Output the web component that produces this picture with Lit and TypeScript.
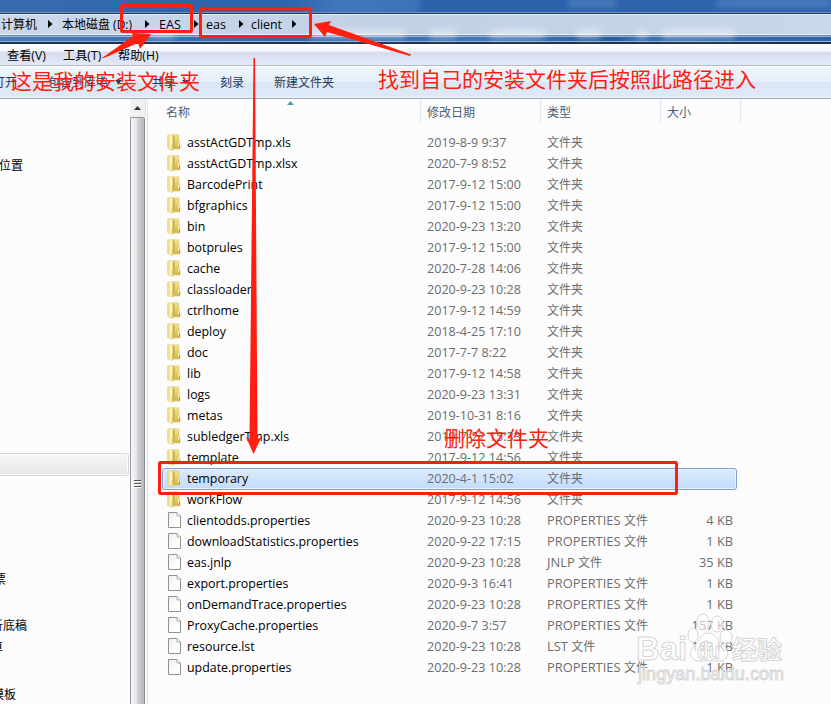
import { LitElement, html, css, svg } from "lit";
import { customElement } from "lit/decorators.js";

type Entry = { name: string; date: string; kind?: string; type: string; size?: string; file?: boolean; selected?: boolean };

const folder = (name: string, date: string, selected = false): Entry => ({ name, date, type: "文件夹", selected });
const file = (name: string, date: string, kind: string, size: string): Entry => ({ name, date, kind, type: "文件", size, file: true });

const ENTRIES: Entry[] = [
  folder("asstActGDTmp.xls", "2019-8-9 9:37"),
  folder("asstActGDTmp.xlsx", "2020-7-9 8:52"),
  folder("BarcodePrint", "2017-9-12 15:00"),
  folder("bfgraphics", "2017-9-12 15:00"),
  folder("bin", "2020-9-23 13:20"),
  folder("botprules", "2017-9-12 15:00"),
  folder("cache", "2020-7-28 14:06"),
  folder("classloader", "2020-9-23 10:28"),
  folder("ctrlhome", "2017-9-12 14:59"),
  folder("deploy", "2018-4-25 17:10"),
  folder("doc", "2017-7-7 8:22"),
  folder("lib", "2017-9-12 14:58"),
  folder("logs", "2020-9-23 13:31"),
  folder("metas", "2019-10-31 8:16"),
  folder("subledgerTmp.xls", "2019-7-22 15:33"),
  folder("template", "2017-9-12 14:56"),
  folder("temporary", "2020-4-1 15:02", true),
  folder("workFlow", "2017-9-12 14:56"),
  file("clientodds.properties", "2020-9-23 10:28", "PROPERTIES", "4 KB"),
  file("downloadStatistics.properties", "2020-9-22 17:15", "PROPERTIES", "1 KB"),
  file("eas.jnlp", "2020-9-23 10:28", "JNLP", "35 KB"),
  file("export.properties", "2020-9-3 16:41", "PROPERTIES", "1 KB"),
  file("onDemandTrace.properties", "2020-9-23 10:28", "PROPERTIES", "1 KB"),
  file("ProxyCache.properties", "2020-9-7 3:57", "PROPERTIES", "157 KB"),
  file("resource.lst", "2020-9-23 10:28", "LST", "183 KB"),
  file("update.properties", "2020-9-23 10:28", "PROPERTIES", "1 KB"),
];

const folderIcon = html`<svg class="icon" width="14" height="17" viewBox="0 0 14 17">
  <defs>
    <linearGradient id="a" x1="0" x2="1"><stop offset="0" stop-color="#e9d77f"/><stop offset=".45" stop-color="#fbf3b5"/><stop offset="1" stop-color="#d9c25c"/></linearGradient>
    <linearGradient id="b" x1="0" x2="0" y1="0" y2="1"><stop offset="0" stop-color="#f3e493"/><stop offset="1" stop-color="#d8b63f"/></linearGradient>
  </defs>
  <path d="M6 .8h5.3q.7 0 .7.7V8l1 .7V15H6z" fill="url(#b)" stroke="#d9c168" stroke-width=".5"/>
  <path d="M.6 1.5Q.6.7 1.400.7H6L7.600 2V15L5 16.400.6 14.600z" fill="url(#a)" stroke="#e0cb70" stroke-width=".5"/>
  <path d="M5.400 1.600l2 .8v11L5.400 15.500z" fill="#b99c3c" opacity=".6"/>
  <path d="M4.200 2h1v8.500l-1-1z" fill="#fff"/>
  <path d="M11.800 8.500v4" stroke="#fffbe0" stroke-width="1"/>
  <path d="M12.500 11v3" stroke="#62aec0" stroke-width="1"/>
</svg>`;

const fileIcon = html`<svg class="icon" width="14" height="17" viewBox="0 0 14 17">
  <defs><linearGradient id="c" x1="0" y1="0" x2="1" y2="1"><stop offset="0" stop-color="#ededeb"/><stop offset=".6" stop-color="#fdfdfc"/></linearGradient></defs>
  <path d="M1.500.5H10L13.500 4V15.500H1.500z" fill="url(#c)" stroke="#929292"/>
  <path d="M10 .8V4h3.300" fill="#fff" stroke="#a0a0a0" stroke-width=".9"/>
</svg>`;

const arrow = html`<svg class="arrow" width="5" height="8" viewBox="0 0 5 8"><path d="M0 0L4.500 4L0 8z" fill="#000"/></svg>`;
const down = html`<svg class="down" width="7" height="4" viewBox="0 0 7 4"><path d="M0 0H7L3.500 4z" fill="#1e395b"/></svg>`;

@customElement("app-root")
export class AppRoot extends LitElement {
  static styles = css`
    :host {
      display: flex; flex-direction: column; position: relative;
      width: 831px; height: 704px; overflow: hidden; background: #fcfcfc;
      font: 12px/21px "Open Sans", "Noto Sans CJK SC", sans-serif; color: #000;
      white-space: nowrap;
    }
    * { box-sizing: border-box; }
    svg { flex: none; display: block; }
    .title { height: 13px; flex: none; background: linear-gradient(100deg, #396cae 0, #2f65ac 22%, #2f65ad 35%, #4377bb 41%, #3e72b6 50%, #2b62ab 51%, #2d64ad 100%); position: relative; border-bottom: 1px solid #6b93c6; }
    .smudge { position: absolute; filter: blur(3px); background: #a9c6ea; opacity: .28; height: 7px; top: 0; }
    .s1 { left: 568px; width: 48px; }
    .s2 { left: 716px; width: 115px; }
    .address { height: 22px; flex: none; display: flex; align-items: center; border-top: 1px solid #26364f; border-bottom: 1px solid #e9f1fa; background: linear-gradient(90deg, #cbd8ea, #c1d1e6 50%, #c8d7ea); box-shadow: inset 0 1px #e6eef7; position: relative; }
    .glow { position: absolute; filter: blur(3px); background: #fff; opacity: .45; height: 8px; top: 16px; }
    .crumb { flex: none; position: relative; margin-left: 9px; }
    .pc { width: 47px; margin-left: 1px; }
    .disk { width: 83px; }
    .e1 { width: 35px; font-size: 12.600px; }
    .e2 { width: 33px; margin-left: 7px; font-size: 12.600px; }
    .e3 { width: 41px; margin-left: 7px; font-size: 12.300px; }
    .arrow { position: relative; }
    .band { height: 9px; flex: none; border-top: 1px solid #6d86ac; border-bottom: 2px solid #1f3350; background: linear-gradient(90deg, #4a7cbc, #2f68b0 35%, #4478bb 60%, #285c9f 74%, #3c70b5 76%, #2c64ae); box-shadow: inset 0 1px #99b3d5, inset 0 -1px #8fb1da; }
    .menu { height: 22px; flex: none; display: flex; align-items: center; padding: 2px 0 0 7px; background: linear-gradient(#fff 0, #f4f7fc 35%, #d6dcee 37%, #e3e8f6 96%); border-bottom: 1px solid #b6bccc; font-size: 12.200px; }
    .menu span { flex: none; }
    .m1 { width: 56px; } .m2 { width: 55px; }
    .tools { height: 33px; flex: none; display: flex; align-items: center; color: #1e395b; background: linear-gradient(#fff 0, #eef5fc 2px, #e6f0fa 48%, #dce6f4 50%, #dde9f7 92%, #e8f1fb 100%); border-bottom: 1px solid #a0afc3; }
    .tools span { flex: none; }
    .open { width: 49px; margin-left: -7px; }
    .lib { width: 61px; margin-left: 6px; }
    .share { width: 24px; margin-left: 30px; }
    .down { margin-left: 6px; }
    .burn { margin-left: 31px; width: 24px; }
    .new { margin-left: 30px; }
    .body { display: flex; flex: 1; min-height: 0; }
    .side { width: 130px; flex: none; overflow: hidden; padding-top: 56px; }
    .side div { height: 21px; }
    .side .i1 { margin-left: -1px; }
    .side .sel { height: 23px; margin: 277px 1px 0 -4px; border: 1px solid #d9d9d9; border-radius: 3px; background: linear-gradient(#f8f8f8, #e5e5e5); box-shadow: inset 0 0 0 1px #fafafa; }
    .side .i2 { margin: 93px 0 0 -6px; }
    .side .i3 { margin: 25px 0 0 -9px; }
    .side .i4 { margin: 1px 0 0 -9px; }
    .side .i5 { margin: 26px 0 0 -8px; }
    .scroll { width: 16px; flex: none; display: flex; flex-direction: column; }
    .up { height: 18px; background: #f0f0f0; display: flex; justify-content: center; align-items: center; border-right: 1px solid #e2e2e2; }
    .thumb { flex: 1; border: 1px solid #979797; border-bottom: 0; border-right-color: #8b8b8f; border-radius: 2px 2px 0 0; background: linear-gradient(90deg, #f7f7f7 0, #e8e8ea 42%, #d5d6da 46%, #bcbdc3 90%); display: flex; justify-content: center; padding-top: 361px; width: 15px; }
    .main { flex: 1; margin-left: 1px; border-left: 1px solid #d6e5f5; min-width: 0; }
    .head { height: 23px; display: grid; grid-template-columns: 273px 120px 120px 80px; color: #4c607a; position: relative; line-height: 27px; margin-bottom: 10px; }
    .head span { border-right: 1px solid #dfe9f5; padding-left: 6px; height: 23px; }
    .head span:first-child { padding-left: 18px; }
    .sort { position: absolute; left: 139px; top: 2px; }
    .row { height: 21px; margin-left: 14px; width: 575px; display: grid; grid-template-columns: 25px 240px 120px 120px 66px; color: #6d6d6d; line-height: 19px; border: 1px solid transparent; }
    .row .icon { margin: 1px 0 0 4px; }
    .row .name { color: #000; font-size: 12.400px; margin-left: -1px; }
    .row .date { font-size: 12.600px; margin-left: -1px; }
    .row .type { margin-left: -1px; }
    .row .kind { font-size: 12.900px; }
    .row .size { font-size: 12.800px; text-align: right; padding-right: 1px; }
    .selected { border-color: #7da2ce; border-radius: 3px; background: linear-gradient(#dcebfd, #c1dbfc); box-shadow: inset 0 0 0 1px #e8f2fe; height: 22px; margin-bottom: -1px; }
    .overlay { position: absolute; left: 0; top: 0; pointer-events: none; }
    .note { font: 400 21px "Noto Sans CJK SC", sans-serif; fill: #ff1e10; }
    .wm { font-family: "Liberation Sans", "Noto Sans CJK SC", sans-serif; fill: #fff; fill-opacity: .6; stroke: #d6d6d6; stroke-width: 1; }
  `;

  private row(e: Entry) {
    return html`<div class="row ${e.selected ? "selected" : ""}">
      ${e.file ? fileIcon : folderIcon}<span class="name">${e.name}</span><span class="date">${e.date}</span><span class="type">${e.kind ? html`<span class="kind">${e.kind} </span>` : ""}${e.type}</span><span class="size">${e.size ?? ""}</span>
    </div>`;
  }

  private notes() {
    return svg`
      <g fill="none" stroke="#ff1e10" stroke-width="3" stroke-linejoin="round">
        <rect x="121.500" y="5.500" width="70" height="26" rx="1"/>
        <rect x="200.500" y="9" width="110" height="27.500" rx="1"/>
        <rect x="159.500" y="462.500" width="517" height="31" rx="1"/>
      </g>
      <g fill="#ff1e10">
        <path d="M102 58L133 36L132 33L151 34L140 49L138 43L104 58z"/>
        <path d="M314 24L331 21L329 25L411 54.500L410 56L327 32L325 37z"/>
        <path d="M253.500 58H255L257.500 439L261.500 437L253.500 454L246 437L249.500 439z"/>
      </g>
      <text class="note" x="11" y="89">这是我的安装文件夹</text>
      <text class="note" x="378" y="87">找到自己的安装文件夹后按照此路径进入</text>
      <text class="note" x="444" y="446">删除文件夹</text>
      <g class="wm">
        <ellipse cx="703" cy="622" rx="6" ry="8"/>
        <ellipse cx="717" cy="624" rx="6" ry="8"/>
        <ellipse cx="693" cy="635" rx="5" ry="7"/>
        <ellipse cx="726" cy="637" rx="6" ry="7"/>
        <path d="M708 633C700 633 700 641 694 646C688 652 690 661 699 661C705 661 711 660 718 661C729 662 730 651 724 646C717 640 716 633 708 633z"/>
        <text x="636" y="660" font-size="33" font-weight="700" textLength="51" lengthAdjust="spacingAndGlyphs">Bai</text>
        <text x="697" y="659" font-size="23" font-weight="700" textLength="23" lengthAdjust="spacingAndGlyphs">du</text>
        <text x="732" y="659" font-size="25" font-weight="700">经验</text>
        <text x="638" y="680" font-size="18" textLength="146">jingyan.baidu.com</text>
      </g>`;
  }

  render() {
    return html`
      <div class="title"><i class="smudge s1"></i><i class="smudge s2"></i></div>
      <div class="address">
        ${[[150, 25], [310, 95], [430, 26], [490, 55], [577, 23], [637, 10], [662, 72]].map(
          ([x, w]) => html`<i class="glow" style="left:${x}px;width:${w}px"></i>`)}
        <span class="crumb pc">计算机</span>${arrow}
        <span class="crumb disk">本地磁盘 (D:)</span>${arrow}
        <span class="crumb e1">EAS</span>${arrow}
        <span class="crumb e2">eas</span>${arrow}
        <span class="crumb e3">client</span>${arrow}
      </div>
      <div class="band"></div>
      <div class="menu"><span class="m1">查看(V)</span><span class="m2">工具(T)</span><span>帮助(H)</span></div>
      <div class="tools">
        <span class="open">打开</span><span class="lib">包含到库中</span>${down}
        <span class="share">共享</span>${down}<span class="burn">刻录</span><span class="new">新建文件夹</span>
      </div>
      <div class="body">
        <div class="side">
          <div class="i1">位置</div><div class="sel"></div><div class="i2">票</div>
          <div class="i3">析底稿</div><div class="i4">算</div><div class="i5">模板</div>
        </div>
        <div class="scroll">
          <div class="up"><svg width="7" height="4" viewBox="0 0 7 4"><path d="M3.500 0L7 4H0z" fill="#333"/></svg></div>
          <div class="thumb"><svg width="7" height="9" viewBox="0 0 7 9"><path d="M0 1.500H7M0 4.500H7M0 7.500H7" stroke="#555"/><path d="M0 2.500H7M0 5.500H7M0 8.500H7" stroke="#fff"/></svg></div>
        </div>
        <div class="main">
          <div class="head"><span>名称</span><span>修改日期</span><span>类型</span><span>大小</span>
            <svg class="sort" width="7" height="4" viewBox="0 0 7 4"><path d="M3.500 0L7 4H0z" fill="#5f93ad"/></svg>
          </div>
          ${ENTRIES.map((e) => this.row(e))}
        </div>
      </div>
      <svg class="overlay" width="831" height="704" viewBox="0 0 831 704">${this.notes()}</svg>`;
  }
}
